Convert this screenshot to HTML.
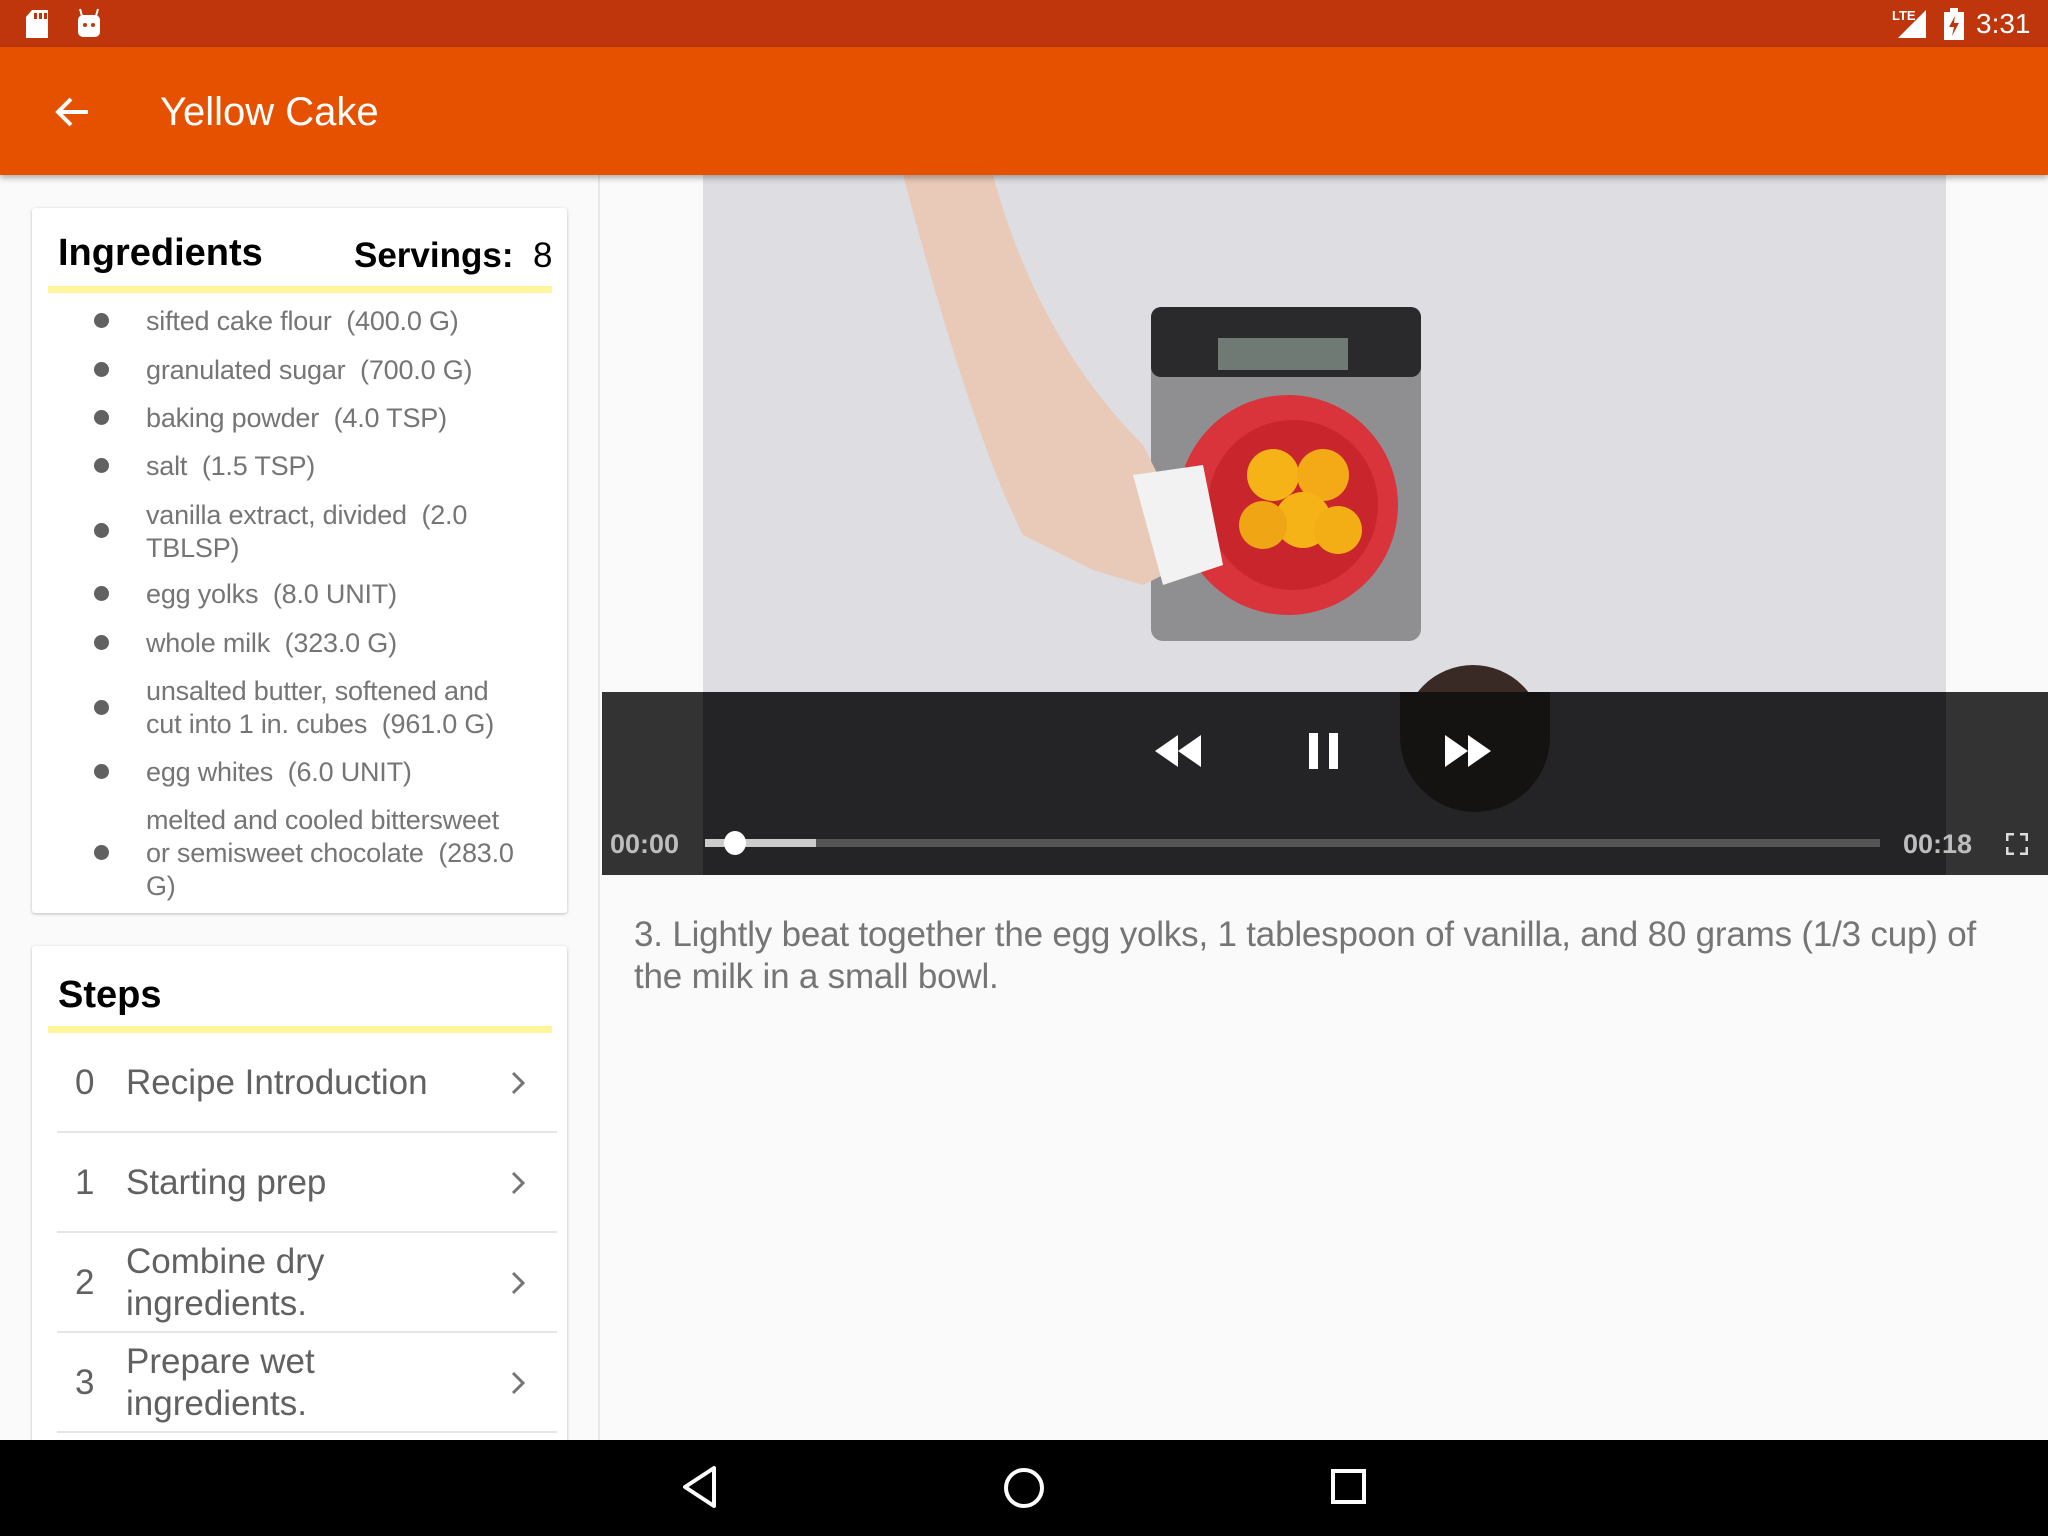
<!DOCTYPE html>
<html><head><meta charset="utf-8"><style>
*{margin:0;padding:0;box-sizing:border-box}
html{width:2048px;height:1536px;overflow:hidden}
body{width:2048px;height:1536px;overflow:hidden;background:#fafafa;font-family:"Liberation Sans",Roboto,sans-serif;position:relative}
.abs{position:absolute}
#status{left:0;top:0;width:2048px;height:47px;background:#bf360c}
#bar{left:0;top:47px;width:2048px;height:128px;background:#e65100;box-shadow:0 3px 6px rgba(0,0,0,.3);z-index:3}
#bar .t{left:160px;top:43px;color:#fff;font-size:40px}
#left{left:0;top:175px;width:600px;height:1265px;border-right:2px solid #e8e8e8;background:#fafafa;overflow:hidden}
.card{position:absolute;left:32px;width:535px;background:#fff;box-shadow:0 1px 3px rgba(0,0,0,.25);border-radius:3px}
.h{position:absolute;font-weight:bold;font-size:38px;color:#000}
.yl{position:absolute;left:16px;width:504px;height:7px;background:#fff59d}
.it{position:absolute;left:114px;font-size:27px;line-height:33px;color:#757575;width:400px;letter-spacing:-0.2px}
.dot{position:absolute;left:62px;width:15px;height:15px;border-radius:50%;background:#616161}
.row{position:absolute;left:25px;width:500px;height:100px;border-bottom:2px solid #e6e6e6}
.row .n{position:absolute;left:18px;font-size:35px;color:#616161}
.row .s{position:absolute;left:69px;font-size:35px;line-height:42px;color:#616161;width:360px}
.row svg{position:absolute;left:453px;top:38px}
#nav{left:0;top:1440px;width:2048px;height:96px;background:#000}
</style></head><body>
<div id="status" class="abs">
<svg class="abs" style="left:24px;top:10px" width="26" height="28"><path d="M8 0H24V28H2V7Z" fill="#fff"/><rect x="10" y="3" width="3" height="6" fill="#bf360c"/><rect x="15" y="3" width="3" height="6" fill="#bf360c"/><rect x="20" y="3" width="3" height="6" fill="#bf360c"/></svg>
<svg class="abs" style="left:77px;top:8px" width="26" height="30"><rect x="1" y="7" width="22" height="22" rx="5" fill="#fff"/><path d="M5 8L3 1M19 8L21 1" stroke="#fff" stroke-width="2"/><circle cx="8" cy="17" r="2" fill="#bf360c"/><circle cx="16" cy="17" r="2" fill="#bf360c"/></svg>
<div class="abs" style="left:1892px;top:8px;color:#fff;font-size:13px;font-weight:bold">LTE</div>
<svg class="abs" style="left:1898px;top:10px" width="30" height="28"><path d="M28 0V28H0Z" fill="#fff"/></svg>
<svg class="abs" style="left:1944px;top:8px" width="20" height="32"><rect x="0" y="4" width="20" height="28" fill="#fff"/><rect x="6" y="0" width="8" height="5" fill="#fff"/><path d="M11 8L5 19H10L8 28L15 15H10Z" fill="#bf360c"/></svg>
<div class="abs" style="left:1976px;top:8px;color:#fff;font-size:28px">3:31</div>
</div>
<div id="bar" class="abs">
<svg class="abs" style="left:54px;top:49px" width="36" height="32"><path d="M34 16H4M17 3L4 16L17 29" stroke="#fff" stroke-width="4" fill="none"/></svg>
<div class="t abs">Yellow Cake</div>
</div>
<div id="left" class="abs">
<div class="card" style="top:33px;height:705px">
<div class="h" style="left:26px;top:24px">Ingredients</div>
<div class="h" style="left:322px;top:28px;font-size:35px">Servings:&nbsp; <span style="font-weight:normal">8</span></div>
<div class="yl" style="top:78px"></div>
<div class="dot" style="top:105px"></div><div class="it" style="top:97px">sifted cake flour&nbsp; (400.0 G)</div>
<div class="dot" style="top:154px"></div><div class="it" style="top:146px">granulated sugar&nbsp; (700.0 G)</div>
<div class="dot" style="top:202px"></div><div class="it" style="top:194px">baking powder&nbsp; (4.0 TSP)</div>
<div class="dot" style="top:250px"></div><div class="it" style="top:242px">salt&nbsp; (1.5 TSP)</div>
<div class="dot" style="top:315px"></div><div class="it" style="top:291px">vanilla extract, divided&nbsp; (2.0<br>TBLSP)</div>
<div class="dot" style="top:378px"></div><div class="it" style="top:370px">egg yolks&nbsp; (8.0 UNIT)</div>
<div class="dot" style="top:427px"></div><div class="it" style="top:419px">whole milk&nbsp; (323.0 G)</div>
<div class="dot" style="top:492px"></div><div class="it" style="top:467px">unsalted butter, softened and<br>cut into 1 in. cubes&nbsp; (961.0 G)</div>
<div class="dot" style="top:556px"></div><div class="it" style="top:548px">egg whites&nbsp; (6.0 UNIT)</div>
<div class="dot" style="top:637px"></div><div class="it" style="top:596px">melted and cooled bittersweet<br>or semisweet chocolate&nbsp; (283.0<br>G)</div>
</div>
<div class="card" style="top:771px;height:520px">
<div class="h" style="left:26px;top:28px">Steps</div>
<div class="yl" style="top:80px"></div>
<div class="row" style="top:87px"><div class="n" style="top:30px">0</div><div class="s" style="top:29px">Recipe Introduction</div><svg width="16" height="24"><path d="M3 2L13 12L3 22" stroke="#757575" stroke-width="3" fill="none"/></svg></div>
<div class="row" style="top:187px"><div class="n" style="top:30px">1</div><div class="s" style="top:29px">Starting prep</div><svg width="16" height="24"><path d="M3 2L13 12L3 22" stroke="#757575" stroke-width="3" fill="none"/></svg></div>
<div class="row" style="top:287px"><div class="n" style="top:30px">2</div><div class="s" style="top:8px">Combine dry<br>ingredients.</div><svg width="16" height="24"><path d="M3 2L13 12L3 22" stroke="#757575" stroke-width="3" fill="none"/></svg></div>
<div class="row" style="top:387px"><div class="n" style="top:30px">3</div><div class="s" style="top:8px">Prepare wet<br>ingredients.</div><svg width="16" height="24"><path d="M3 2L13 12L3 22" stroke="#757575" stroke-width="3" fill="none"/></svg></div>
</div>
</div>
<div class="abs" style="left:602px;top:175px;width:1446px;height:700px;background:#fafafa"></div>
<svg class="abs" style="left:703px;top:175px" width="1243" height="517">
<rect width="1243" height="517" fill="#dedde2"/>
<rect x="448" y="132" width="270" height="334" rx="12" fill="#8f8f91"/>
<rect x="448" y="132" width="270" height="70" rx="10" fill="#2a2a2c"/>
<rect x="515" y="163" width="130" height="32" fill="#6f7a75"/>
<circle cx="585" cy="330" r="110" fill="#d9343b"/>
<circle cx="590" cy="330" r="85" fill="#c8262c"/>
<circle cx="570" cy="300" r="26" fill="#f5b317"/><circle cx="620" cy="300" r="26" fill="#f4a916"/><circle cx="600" cy="345" r="28" fill="#f5b317"/><circle cx="560" cy="350" r="24" fill="#f0a514"/><circle cx="635" cy="355" r="24" fill="#f4ae15"/>
<path d="M200 0L290 0C320 110 370 200 440 270L470 330L480 390L440 410L390 395L320 360C280 280 240 150 200 0Z" fill="#e9c9b7"/>
<path d="M430 300L500 290L520 390L460 410Z" fill="#f2f2f2"/>
<circle cx="770" cy="560" r="70" fill="#3a2a26"/>
</svg>
<div class="abs" style="left:602px;top:692px;width:1446px;height:183px;background:#333"></div>
<div class="abs" style="left:703px;top:692px;width:1243px;height:183px;background:#242426"></div>
<div class="abs" style="left:1400px;top:692px;width:150px;height:120px;border-radius:0 0 75px 75px;background:#151212"></div>
<svg class="abs" style="left:1155px;top:733px" width="50" height="36"><path d="M0 18L23 2V34ZM23 18L46 2V34Z" fill="#fff"/></svg>
<svg class="abs" style="left:1307px;top:731px" width="36" height="40"><rect x="2" y="2" width="9" height="36" fill="#fff"/><rect x="22" y="2" width="9" height="36" fill="#fff"/></svg>
<svg class="abs" style="left:1445px;top:733px" width="50" height="36"><path d="M0 2L23 18L0 34ZM23 2L46 18L23 34Z" fill="#fff"/></svg>
<div class="abs" style="left:610px;top:829px;color:#bdbdbd;font-size:27px;font-weight:bold">00:00</div>
<div class="abs" style="left:1903px;top:829px;color:#bdbdbd;font-size:27px;font-weight:bold">00:18</div>
<div class="abs" style="left:705px;top:839px;width:1175px;height:8px;background:#555"></div>
<div class="abs" style="left:705px;top:839px;width:111px;height:8px;background:#ccc"></div>
<div class="abs" style="left:724px;top:831px;width:22px;height:24px;border-radius:50%;background:#fff"></div>
<svg class="abs" style="left:2006px;top:833px" width="22" height="22"><path d="M1 8V1H8M14 1H21V8M21 14V21H14M8 21H1V14" stroke="#ddd" stroke-width="3" fill="none"/></svg>
<div class="abs" style="left:634px;top:914px;width:1390px;font-size:35px;line-height:42px;color:#757575;letter-spacing:-0.2px">3. Lightly beat together the egg yolks, 1 tablespoon of vanilla, and 80 grams (1/3 cup) of the milk in a small bowl.</div>
<div id="nav" class="abs">
<svg class="abs" style="left:680px;top:24px" width="40" height="48"><path d="M34 4V42L5 23Z" stroke="#fff" stroke-width="4" fill="none" stroke-linejoin="round"/></svg>
<svg class="abs" style="left:1002px;top:26px" width="44" height="44"><circle cx="22" cy="22" r="18" stroke="#fff" stroke-width="4" fill="none"/></svg>
<svg class="abs" style="left:1330px;top:28px" width="38" height="38"><rect x="3" y="3" width="31" height="31" stroke="#fff" stroke-width="4" fill="none"/></svg>
</div>
</body></html>
